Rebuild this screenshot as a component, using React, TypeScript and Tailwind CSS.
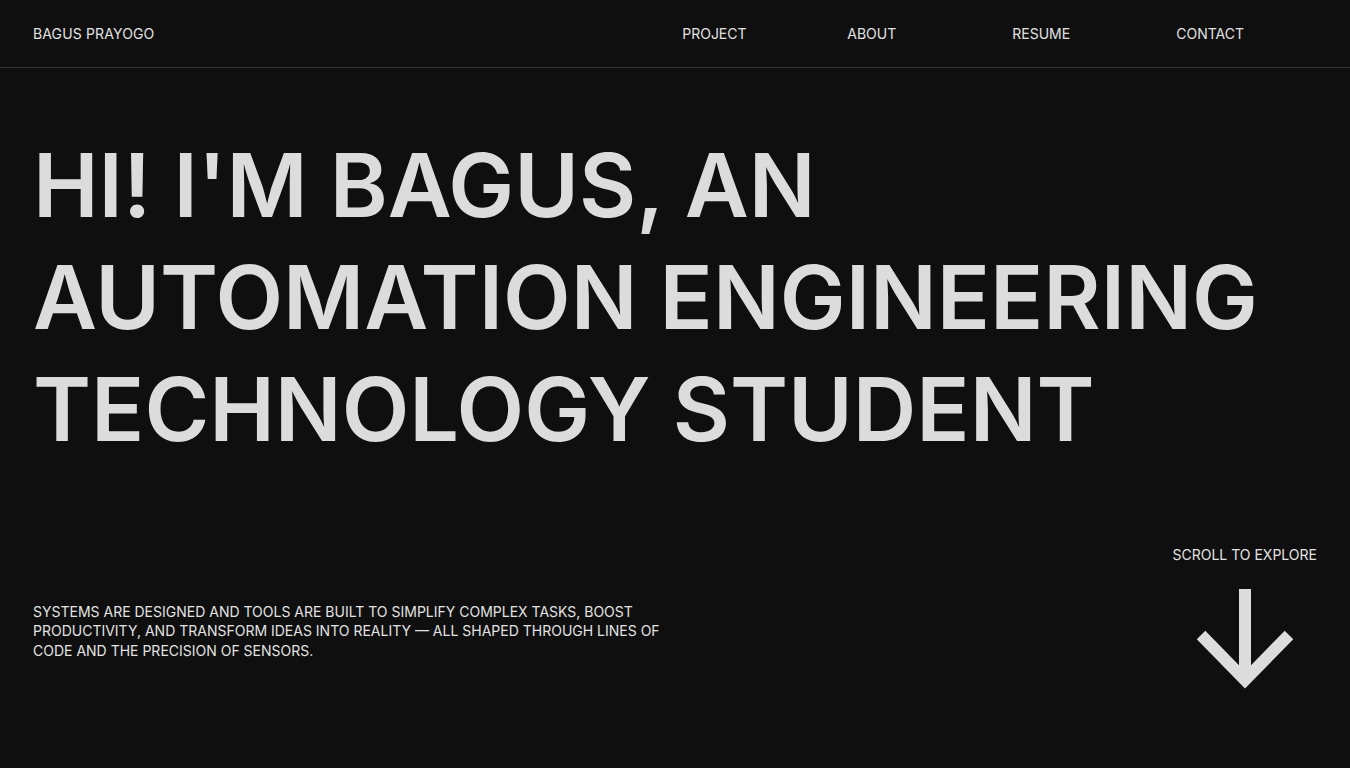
export default function App() {
  const navItems = ['PROJECT', 'ABOUT', 'RESUME', 'CONTACT'];

  return (
    <div className="min-h-screen w-full bg-[#0f0f0f] text-[#dcdcdc] font-['Inter',sans-serif]">
      {/* Header */}
      <header className="h-[68px] border-b border-[#333333] flex items-center px-[33px]">
        <div className="text-[14px] tracking-[0.01em] text-[#e2e2e2]">BAGUS PRAYOGO</div>
        <nav className="ml-auto flex items-center mr-[73px] text-[14px] text-[#e2e2e2]">
          <a className="w-[165px]">{navItems[0]}</a>
          <a className="w-[165px]">{navItems[1]}</a>
          <a className="w-[164px]">{navItems[2]}</a>
          <a>{navItems[3]}</a>
        </nav>
      </header>

      {/* Hero */}
      <main className="px-[33px]">
        <h1 className="pt-[61px] text-[88px] leading-[112px] font-semibold tracking-normal text-[#dcdcdc]">
          HI! I'M BAGUS, AN
          <br />
          AUTOMATION ENGINEERING
          <br />
          TECHNOLOGY STUDENT
        </h1>

        <div className="mt-[79px] flex items-end justify-between">
          <p className="w-[640px] mb-[29px] text-[14px] leading-[19.5px] text-[#e2e2e2]">
            SYSTEMS ARE DESIGNED AND TOOLS ARE BUILT TO SIMPLIFY COMPLEX TASKS, BOOST PRODUCTIVITY, AND TRANSFORM IDEAS INTO REALITY — ALL SHAPED THROUGH LINES OF CODE AND THE PRECISION OF SENSORS.
          </p>
          <div className="flex flex-col items-center">
            <span className="text-[14px] text-[#e2e2e2]">SCROLL TO EXPLORE</span>
            <svg width="100" height="100" viewBox="0 0 100 100" className="mt-[24px] translate-x-[2px]">
              <path d="M48 0 V92" stroke="#dcdcdc" strokeWidth="12" fill="none" />
              <path d="M4 46 L48 91 L92 46" stroke="#dcdcdc" strokeWidth="12" fill="none" />
            </svg>
          </div>
        </div>
      </main>
    </div>
  );
}
